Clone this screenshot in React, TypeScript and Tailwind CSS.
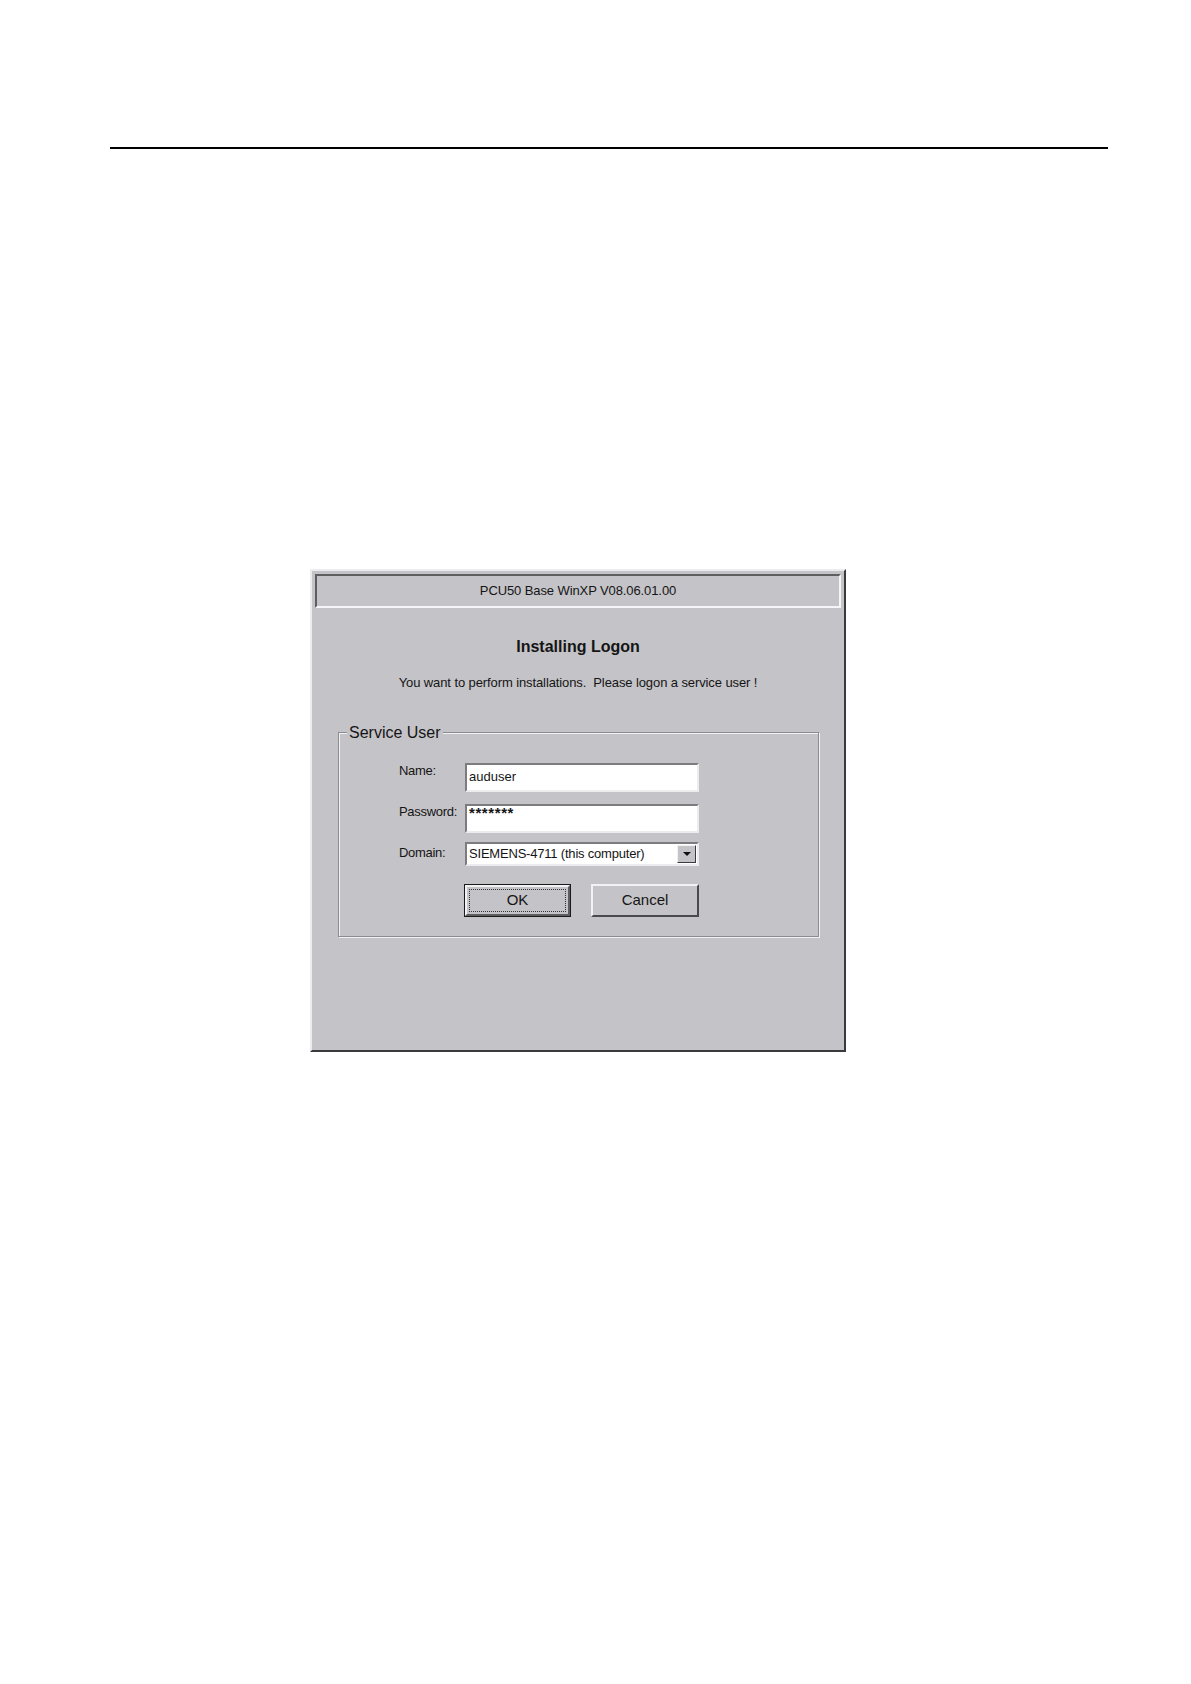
export default function App() {
  return (
    <div className="w-[1191px] min-h-[1684px] bg-white pt-[147px] font-['Liberation_Sans',Arial,sans-serif] text-[#151515]">
      <div className="ml-[110px] w-[998px] h-[1.5px] bg-black" />
      <div className="ml-[310px] mt-[420px]">
        <LogonDialog />
      </div>
    </div>
  );
}

function LogonDialog() {
  return (
    <div className="w-[536px] h-[483px] bg-[#c4c3c7] border-2 border-t-[#ececee] border-l-[#ececee] border-r-[#3a3a3c] border-b-[#3a3a3c] pt-[3px] px-[3px] flex flex-col">
      {/* title panel */}
      <div className="h-[34px] border-2 border-t-[#5e5e60] border-l-[#5e5e60] border-r-[#f6f6f8] border-b-[#f6f6f8] flex items-center justify-center text-[13px] tracking-[-0.1px]">
        PCU50 Base WinXP V08.06.01.00
      </div>

      <div className="flex flex-col items-center">
        <h1 className="mt-[29px] text-[16px] leading-[20px] font-bold">Installing Logon</h1>
        <p className="mt-[18px] text-[13px] leading-[16px] tracking-[-0.1px] whitespace-pre">
          You want to perform installations.  Please logon a service user !
        </p>
      </div>

      <fieldset className="mt-[33px] ml-[23px] w-[481px] h-[213px] border border-[#8c8b8f] shadow-[1px_1px_0_#f2f2f4,inset_1px_1px_0_#f2f2f4] px-0">
        <legend className="ml-[8px] px-[2px] bg-[#c4c3c7] text-[16px] leading-[18px]">Service User</legend>

        <div className="pl-[60px] pt-[21px] flex flex-col">
          <Row label="Name:">
            <TextBox value="auduser" />
          </Row>
          <Row label="Password:" className="mt-[12px]">
            <div className="w-[234px] h-[29px] bg-white border-2 border-t-[#7c7b80] border-l-[#7c7b80] border-r-[#ececee] border-b-[#ececee] pl-[2px] text-[15px] leading-[13px] font-bold tracking-[0.6px]">
              *******
            </div>
          </Row>
          <Row label="Domain:" className="mt-[9px]" labelTop="pt-[3px]">
            <div className="w-[234px] h-[24px] bg-white border-2 border-t-[#7c7b80] border-l-[#7c7b80] border-r-[#ececee] border-b-[#ececee] flex items-center">
              <span className="flex-1 pl-[2px] text-[13px] leading-[16px] tracking-[-0.2px]">SIEMENS-4711 (this computer)</span>
              <div className="w-[19px] h-[18px] mr-[1px] bg-[#c4c3c7] border border-t-[#f2f2f4] border-l-[#f2f2f4] border-r-[#3a3a3c] border-b-[#3a3a3c] flex items-center justify-center">
                <svg width="8" height="4" viewBox="0 0 8 4">
                  <path d="M0 0h8L4 4z" fill="#111" />
                </svg>
              </div>
            </div>
          </Row>

          <div className="mt-[18px] pl-[65px] flex gap-[20px]">
            <button className="w-[107px] h-[33px] border border-[#1a1a1a] bg-[#c4c3c7] p-0">
              <div className="h-full border-2 border-t-[#f2f2f4] border-l-[#f2f2f4] border-r-[#5e5e60] border-b-[#5e5e60] p-[2px]">
                <div className="h-full border border-dotted border-[#333] flex items-center justify-center text-[15px]">
                  OK
                </div>
              </div>
            </button>
            <button className="w-[108px] h-[33px] bg-[#c4c3c7] border-2 border-t-[#f2f2f4] border-l-[#f2f2f4] border-r-[#4a4a4c] border-b-[#4a4a4c] flex items-center justify-center text-[15px]">
              Cancel
            </button>
          </div>
        </div>
      </fieldset>
    </div>
  );
}

function Row({
  label,
  children,
  className = "",
  labelTop = "pt-0",
}: {
  label: string;
  children: React.ReactNode;
  className?: string;
  labelTop?: string;
}) {
  return (
    <div className={`flex items-start ${className}`}>
      <span className={`w-[66px] text-[13px] leading-[16px] tracking-[-0.3px] ${labelTop}`}>{label}</span>
      {children}
    </div>
  );
}

function TextBox({ value }: { value: string }) {
  return (
    <div className="w-[234px] h-[29px] bg-white border-2 border-t-[#7c7b80] border-l-[#7c7b80] border-r-[#ececee] border-b-[#ececee] pl-[2px] flex items-center text-[13px] leading-[16px]">
      {value}
    </div>
  );
}
